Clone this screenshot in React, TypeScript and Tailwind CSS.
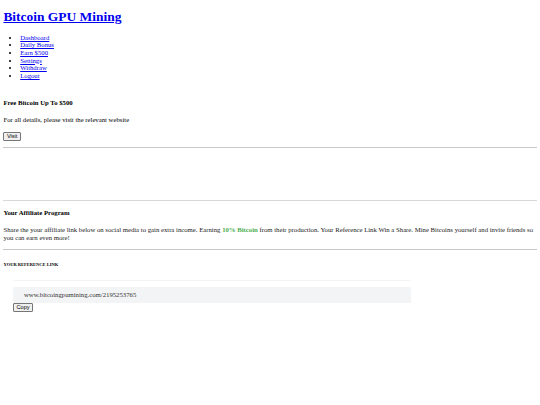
export default function App() {
  const links = ["Dashboard", "Daily Bonus", "Earn $500", "Settings", "Withdraw", "Logout"];
  const serif = "font-['Liberation_Serif','Times_New_Roman',serif]";
  const btn =
    "font-['Liberation_Sans',Arial,sans-serif] text-[5.6px] leading-[6.4px] px-[2.5px] py-[0.6px] bg-[#efefef] border-[0.8px] border-[#767676] rounded-[1px] text-black";
  return (
    <div className={`${serif} bg-white text-black w-[540px] h-[405px] px-[3.4px] pt-[9px] overflow-hidden`}>
      <h1 className="text-[13.44px] leading-[15.5px] font-bold">
        <a className="text-[#0000ee] underline" href="#">Bitcoin GPU Mining</a>
      </h1>
      <ul className="mt-[9px] list-disc pl-[16.8px] text-[6.72px] leading-[7.7px]">
        {links.map((l) => (
          <li key={l}>
            <a className="text-[#0000ee] underline" href="#">{l}</a>
          </li>
        ))}
      </ul>
      <h5 className="mt-[19.5px] text-[6.72px] leading-[7.7px] font-bold">Free Bitcoin Up To $500</h5>
      <p className="mt-[9px] text-[6.72px] leading-[7.7px]">For all details, please visit the relevant website</p>
      <div className="mt-[8px] flex">
        <button className={btn}>Visit</button>
      </div>
      <hr className="mt-[6px] border-t-[0.8px] border-[#c8c8c8]" />
      <hr className="mt-[52px] border-t-[0.8px] border-[#d8d8d8]" />
      <h5 className="mt-[8px] text-[6.72px] leading-[7.7px] font-bold">Your Affiliate Program</h5>
      <p className="mt-[9px] text-[6.72px] leading-[7.7px] text-[#222]">
        Share the your affiliate link below on social media to gain extra income. Earning{" "}
        <span className="text-[#4caf50] font-bold">10% Bitcoin</span> from their production. Your Reference Link Win a Share. Mine Bitcoins yourself and invite friends so you can earn even more!
      </p>
      <hr className="mt-[7.5px] border-t-[0.8px] border-[#c8c8c8]" />
      <h6 className="mt-[11.7px] text-[4.5px] leading-[5px] font-bold uppercase">Your Reference Link</h6>
      <div className="ml-[9.6px] mt-[13.5px] w-[398px] border-t-[0.5px] border-[#f3f4f6] h-[7px]" />
      <div className="ml-[9.6px] w-[398px] h-[15.5px] bg-[#f3f4f6] flex items-center pl-[11px] text-[6.72px] leading-[7.7px] text-[#333]">
        www.bitcoingpumining.com/2195253765
      </div>
      <div className="ml-[9.6px] flex">
        <button className={btn}>Copy</button>
      </div>
    </div>
  );
}
